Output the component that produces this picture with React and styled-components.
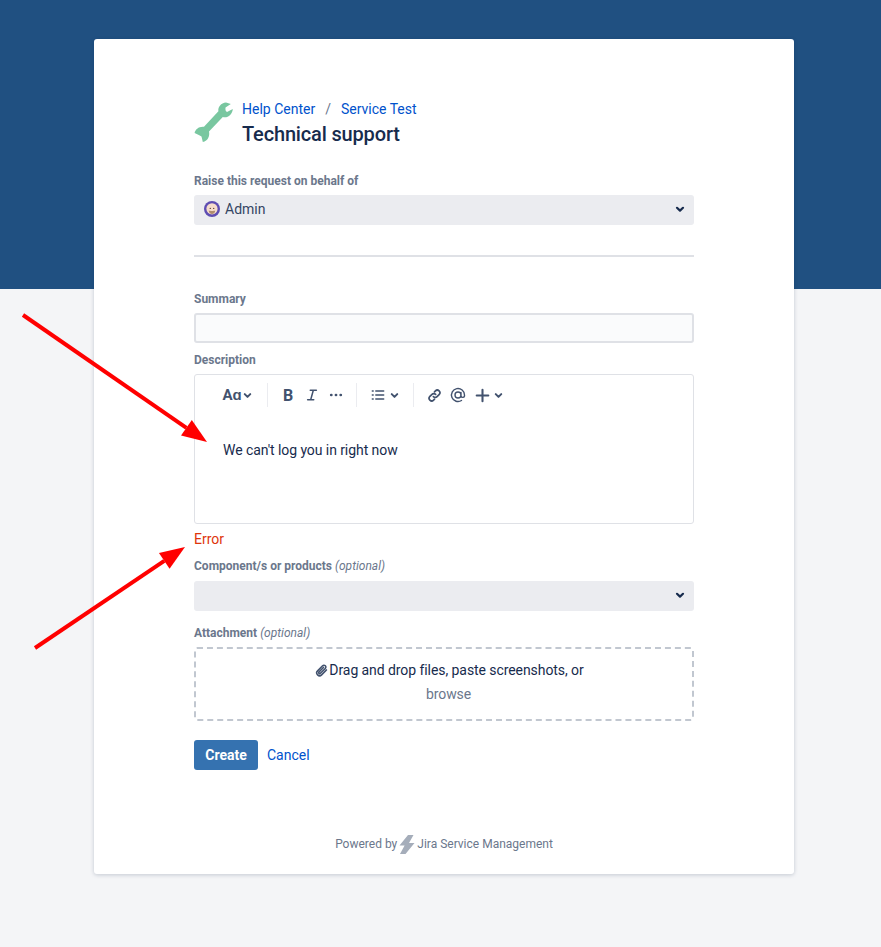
import styled, { createGlobalStyle } from "styled-components";

const GlobalStyle = createGlobalStyle`
  html, body {
    margin: 0;
    padding: 0;
  }
  body {
    font-family: Roboto, "Liberation Sans", sans-serif;
    font-size: 14px;
    color: #172b4d;
  }
  * {
    box-sizing: border-box;
  }
`;

const Page = styled.div`
  position: relative;
  height: 947px;
  overflow: hidden;
  padding-top: 39px;
  background: linear-gradient(#205081 289px, #f4f5f7 289px);
`;

const Card = styled.main`
  width: 700px;
  height: 835px;
  margin-left: 94px;
  padding: 59px 100px 0;
  background: #fff;
  border-radius: 3px;
  box-shadow: 0 1px 4px rgba(9, 30, 66, 0.2);
`;

const Header = styled.header`
  display: flex;
  align-items: center;
  gap: 9px;
  height: 48px;
  margin-bottom: 27px;
`;

const Crumbs = styled.nav`
  display: flex;
  gap: 10px;
  height: 20px;
  line-height: 20px;
  margin-bottom: 3px;
  color: #6b778c;
`;

const A = styled.a`
  color: #0052cc;
  text-decoration: none;
  cursor: pointer;
`;

const Title = styled.h1`
  margin: 0;
  font-size: 20px;
  font-weight: 500;
  line-height: 24px;
  letter-spacing: -0.008em;
  color: #172b4d;
`;

const Label = styled.label`
  display: block;
  height: 16px;
  line-height: 16px;
  font-size: 12px;
  font-weight: 700;
  color: #6b778c;
  margin-top: ${(p) => p.$top || 0}px;
  margin-bottom: ${(p) => p.$bottom || 6}px;

  em {
    font-weight: 400;
  }
`;

const Select = styled.div`
  display: flex;
  align-items: center;
  height: 30px;
  padding: 0 8px 2px 10px;
  background: #ebecf0;
  border-radius: 3px;
  color: #344563;
`;

const Avatar = styled.svg`
  width: 16px;
  height: 16px;
  margin-right: 5px;
`;

const Chevron = styled.svg`
  width: ${(p) => p.$size || 12}px;
  height: ${(p) => p.$size || 12}px;
  fill: none;
  stroke: ${(p) => p.$color || "#172b4d"};
  stroke-width: 2.2;
  stroke-linecap: round;
  stroke-linejoin: round;
  margin-left: ${(p) => (p.$end ? "auto" : `${p.$ml || 0}px`)};
`;

const Divider = styled.hr`
  height: 2px;
  margin: 30px 0 34px;
  border: 0;
  background: #dfe1e6;
`;

const TextInput = styled.div`
  height: 30px;
  background: #fafbfc;
  border: 2px solid #dfe1e6;
  border-radius: 3px;
`;

const Editor = styled.div`
  height: 150px;
  border: 1px solid #dfe1e6;
  border-radius: 3px;
`;

const Toolbar = styled.div`
  display: flex;
  align-items: center;
  height: 24px;
  margin-top: 8px;
  padding-left: 27px;
  color: #42526e;
`;

const Tool = styled.span`
  display: inline-flex;
  align-items: center;
  justify-content: center;
  width: ${(p) => p.$w}px;
  height: 24px;
  color: #42526e;
  font-weight: 700;
  font-size: ${(p) => p.$size || 14}px;
`;

const Sep = styled.span`
  width: 1px;
  height: 24px;
  background: #ebecf0;
  margin: 0 ${(p) => p.$right}px 0 ${(p) => p.$left}px;
`;

const Icon = styled.svg`
  width: ${(p) => p.$size || 16}px;
  height: ${(p) => p.$size || 16}px;
  margin-left: ${(p) => p.$ml || 0}px;
  fill: none;
  stroke: #42526e;
  stroke-width: ${(p) => p.$sw || 1.8};
  stroke-linecap: round;
  stroke-linejoin: round;
`;

const Body = styled.p`
  margin: 33px 0 0 28px;
  line-height: 20px;
  letter-spacing: -0.005em;
  color: #172b4d;
`;

const ErrorText = styled.div`
  height: 20px;
  margin-top: 5px;
  margin-bottom: 9px;
  line-height: 20px;
  color: #de350b;
`;

const Drop = styled.div`
  height: 74px;
  padding: 9px 0 0 11px;
  border: 2px dashed #c1c7d0;
  border-radius: 3px;
  text-align: center;
  line-height: 24px;
  letter-spacing: -0.005em;
`;

const Clip = styled.svg`
  width: 13px;
  height: 13px;
  margin-right: 1px;
  vertical-align: -2px;
  fill: none;
  stroke: #42526e;
  stroke-width: 1.7;
  stroke-linecap: round;
`;

const Browse = styled.div`
  padding-right: 2px;
  color: #6b778c;
`;

const Actions = styled.div`
  display: flex;
  align-items: center;
  gap: 9px;
  margin-top: 19px;
`;

const Button = styled.button`
  height: 30px;
  width: 64px;
  padding: 0;
  border: 0;
  border-radius: 3px;
  background: #3572b0;
  color: #fff;
  font: 700 14px Roboto, sans-serif;
`;

const Footer = styled.footer`
  display: flex;
  justify-content: center;
  align-items: center;
  gap: 2px;
  margin-top: 62px;
  height: 24px;
  font-size: 12px;
  color: #6b778c;
`;

const Annotations = styled.svg`
  position: absolute;
  left: 0;
  top: 0;
  width: 881px;
  height: 947px;
  pointer-events: none;
`;

function Wrench() {
  return (
    <svg width="39" height="40" viewBox="0 0 39 40" aria-hidden="true">
      <path
        fill="#79c7a0"
        d="M24.4 9.2C23.8 4.8 27 .8 32 .4L36.8 2 31.5 5.5Q31 9 33 10L38.8 7C38.4 12.4 33.4 16.6 28.8 15L15 29.4C16 33.8 14 39 8.8 39.9L7.5 34.5Q5.5 33 .6 31C1.2 27.4 5 24.2 10 24.8z"
      />
    </svg>
  );
}

function Bolt() {
  return (
    <svg width="16" height="19" viewBox="0 0 16 19" aria-hidden="true">
      <path
        fill="#a5adba"
        d="M9 0h5.5L10 8h5.5L6.5 19H1l4.6-8.4H.5z"
      />
    </svg>
  );
}

function Arrow({ x1, y1, x2, y2 }) {
  const angle = Math.atan2(y2 - y1, x2 - x1);
  const len = 25;
  const half = 9.5;
  const bx = x2 - Math.cos(angle) * len;
  const by = y2 - Math.sin(angle) * len;
  const nx = -Math.sin(angle) * half;
  const ny = Math.cos(angle) * half;
  return (
    <g>
      <line x1={x1} y1={y1} x2={bx} y2={by} stroke="#ff0000" strokeWidth="4" />
      <polygon
        fill="#ff0000"
        points={`${x2},${y2} ${bx + nx},${by + ny} ${bx - nx},${by - ny}`}
      />
    </g>
  );
}

export default function App() {
  return (
    <Page>
      <GlobalStyle />
      <Card>
        <Header>
          <Wrench />
          <div>
            <Crumbs>
              <A>Help Center</A>
              <span>/</span>
              <A>Service Test</A>
            </Crumbs>
            <Title>Technical support</Title>
          </div>
        </Header>

        <Label>Raise this request on behalf of</Label>
        <Select>
          <Avatar viewBox="0 0 16 16">
            <circle cx="8" cy="8" r="8" fill="#5e4db2" />
            <circle cx="8" cy="7.8" r="5.6" fill="#f6dccb" />
            <path d="M4.8 9.5c1 .6 5.4.6 6.4 0 0 2.2-1.4 3.6-3.2 3.6s-3.2-1.4-3.2-3.6z" fill="#b08d6e" />
            <circle cx="6.3" cy="7.4" r="0.7" fill="#5b4636" />
            <circle cx="9.7" cy="7.4" r="0.7" fill="#5b4636" />
          </Avatar>
          Admin
          <Chevron $end viewBox="0 0 12 12">
            <path d="M3 4.8L6 7.6l3-2.8" />
          </Chevron>
        </Select>

        <Divider />

        <Label>Summary</Label>
        <TextInput />

        <Label $top={9}>Description</Label>
        <Editor>
          <Toolbar>
            <Tool $w={20} $size={15}>Aɑ</Tool>
            <Chevron $size={11} $color="#42526e" viewBox="0 0 12 12">
              <path d="M3 4.5L6 7.5l3-3" />
            </Chevron>
            <Sep $left={14} $right={10} />
            <Tool $w={20} $size={16}>B</Tool>
            <Icon viewBox="0 0 16 16" $size={14} $ml={7} $sw={1.7}>
              <path d="M6 2.5h7M3 13.5h7M9.5 2.5l-3 11" />
            </Icon>
            <Icon viewBox="0 0 16 16" $size={14} $ml={10} $sw={3}>
              <path d="M2.5 8h.2M7.9 8h.2M13.3 8h.2" />
            </Icon>
            <Sep $left={13} $right={14} />
            <Icon viewBox="0 0 16 16" $size={14} $sw={1.7}>
              <path d="M1.5 3.5h1M1.5 8h1M1.5 12.5h1M5.5 3.5h9M5.5 8h9M5.5 12.5h9" />
            </Icon>
            <Chevron $size={11} $color="#42526e" $ml={4} viewBox="0 0 12 12">
              <path d="M3 4.5L6 7.5l3-3" />
            </Chevron>
            <Sep $left={13} $right={13} />
            <Icon viewBox="0 0 16 16" $size={15}>
              <path d="M6.8 9.2a2.7 2.7 0 0 0 3.9 0l2.2-2.2a2.7 2.7 0 0 0-3.9-3.9l-1 1" />
              <path d="M9.2 6.8a2.7 2.7 0 0 0-3.9 0L3.1 9a2.7 2.7 0 0 0 3.9 3.9l1-1" />
            </Icon>
            <Icon viewBox="0 0 16 16" $ml={8} $sw={1.4}>
              <path d="M11 8a3 3 0 1 1-6 0 3 3 0 0 1 6 0zM11 5.5V9a1.8 1.8 0 0 0 3.5 0V8a6.5 6.5 0 1 0-3 5.5" />
            </Icon>
            <Icon viewBox="0 0 16 16" $size={15} $ml={9} $sw={2.2}>
              <path d="M8 1.8v12.4M1.8 8h12.4" />
            </Icon>
            <Chevron $size={11} $color="#42526e" $ml={3} viewBox="0 0 12 12">
              <path d="M3 4.5L6 7.5l3-3" />
            </Chevron>
          </Toolbar>
          <Body>We can't log you in right now</Body>
        </Editor>
        <ErrorText>Error</ErrorText>

        <Label $bottom={7}>
          Component/s or products <em>(optional)</em>
        </Label>
        <Select>
          <Chevron $end viewBox="0 0 12 12">
            <path d="M3 4.8L6 7.6l3-2.8" />
          </Chevron>
        </Select>

        <Label $top={14}>
          Attachment <em>(optional)</em>
        </Label>
        <Drop>
          <div>
            <Clip viewBox="0 0 14 14">
              <path d="M12.3 6.4l-5.2 5.3a3 3 0 0 1-4.3-4.3l5.4-5.5a2 2 0 0 1 2.9 2.9L5.8 10a1 1 0 0 1-1.5-1.4l4.8-4.9" />
            </Clip>
            Drag and drop files, paste screenshots, or
          </div>
          <Browse>browse</Browse>
        </Drop>

        <Actions>
          <Button type="button">Create</Button>
          <A>Cancel</A>
        </Actions>

        <Footer>
          <span>Powered by</span>
          <Bolt />
          <span>Jira Service Management</span>
        </Footer>
      </Card>

      <Annotations viewBox="0 0 881 947">
        <Arrow x1={23} y1={315} x2={207} y2={442} />
        <Arrow x1={35} y1={648} x2={185} y2={547} />
      </Annotations>
    </Page>
  );
}
